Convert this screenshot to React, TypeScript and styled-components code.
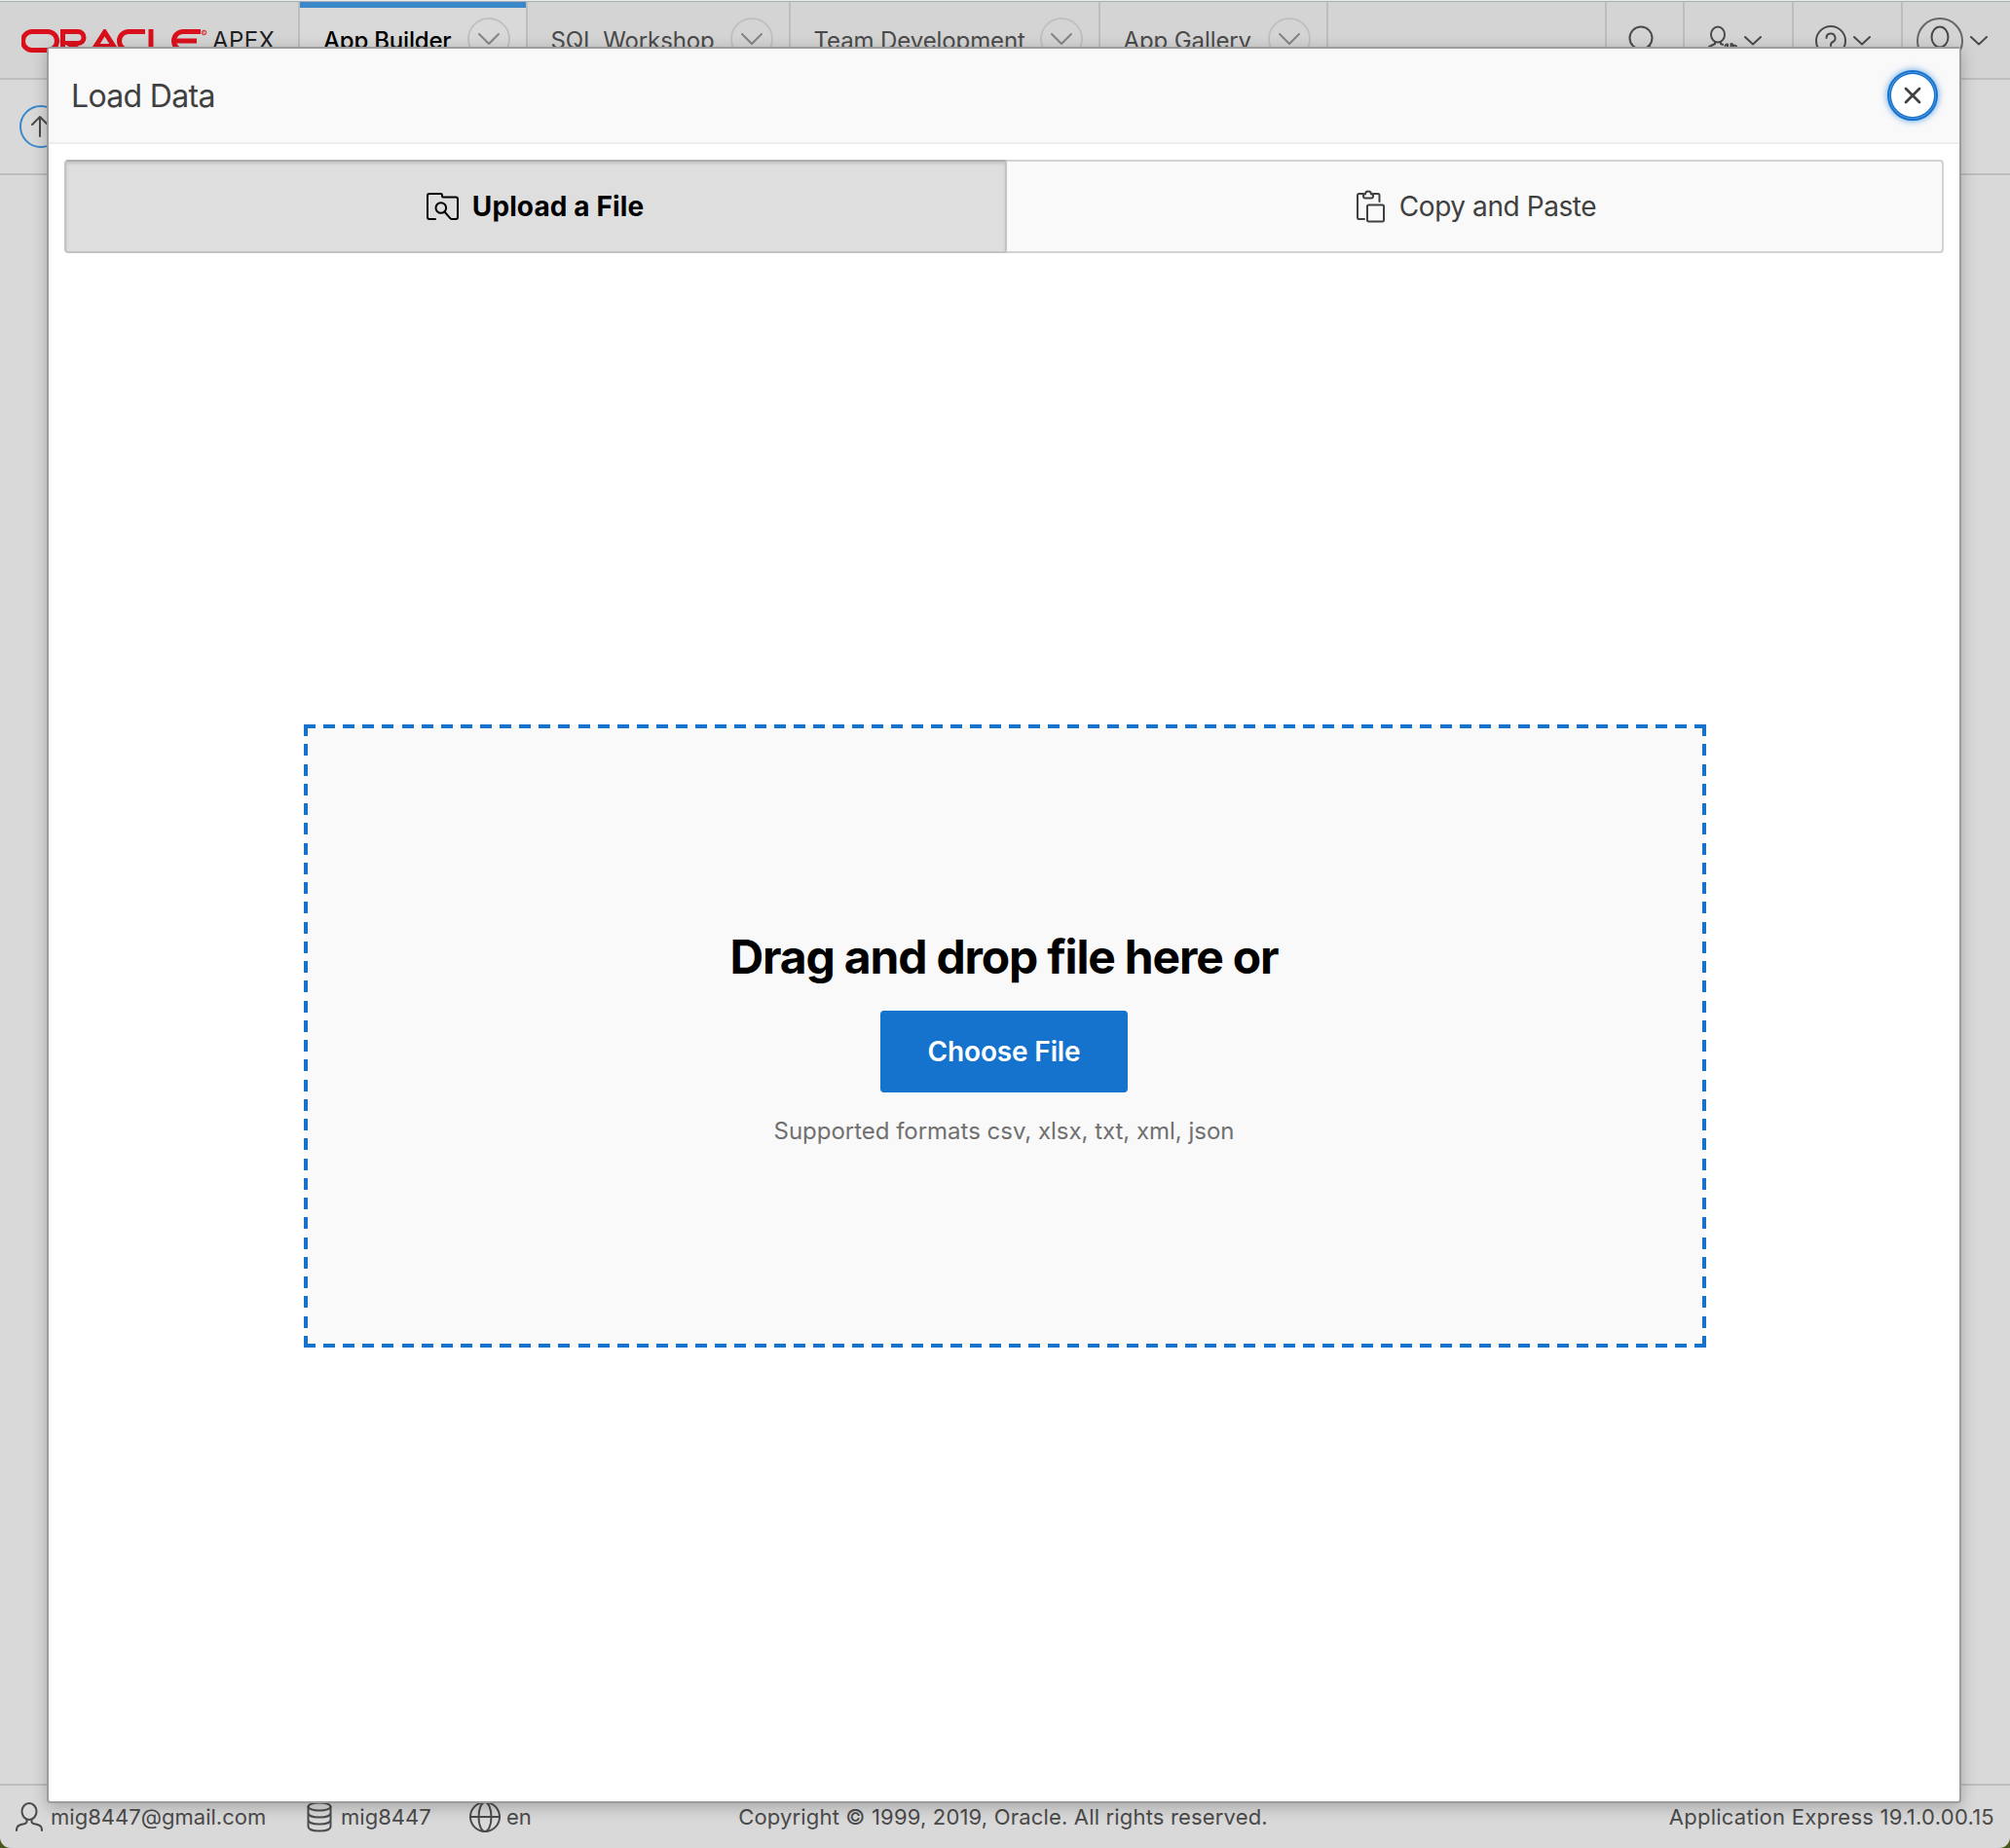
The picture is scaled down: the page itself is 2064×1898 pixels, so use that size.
import React from 'react';
import styled, { createGlobalStyle } from 'styled-components';

const line = '#bdbdbd';
const ink = '#4a4a4a';
const blue = '#1573cd';

const GlobalStyle = createGlobalStyle`
  *, *::before, *::after { box-sizing: border-box; }
  body {
    margin: 0;
    background: #46581c;
    font-family: Inter, 'Liberation Sans', sans-serif;
    color: #404040;
  }
  button { font: inherit; color: inherit; margin: 0; padding: 0; }
  svg { display: block; flex: none; }
`;

const Page = styled.div`
  position: relative;
  width: 2064px;
  height: 1898px;
  display: flex;
  flex-direction: column;
  background: #d9d9d9;
  border-top: 1px solid #e9ecec;
  border-radius: 0 0 11px 11px;
  overflow: hidden;
`;

const NavBar = styled.header`
  display: flex;
  flex: none;
  height: 81px;
  background: #d4d4d4;
  border-top: 1px solid #a9afb0;
  border-bottom: 2px solid ${line};
`;

const Brand = styled.div`
  display: flex;
  width: 308px;
  padding: 0 0 0 22px;
  border-right: 2px solid ${line};
`;

const BrandLogo = styled.svg`
  margin-top: 28px;
`;

const BrandName = styled.span`
  margin-left: 4px;
  line-height: 80px;
  font-size: 24px;
  letter-spacing: 0.4px;
  color: #1f1f1f;
`;

const Tab = styled.div<{ $width: number; $active?: boolean }>`
  display: flex;
  align-items: center;
  justify-content: space-between;
  width: ${(p) => p.$width + 2}px;
  padding: 0 16px 0 ${(p) => (p.$active ? 24 : 23.5)}px;
  border-right: 2px solid ${line};
  background: ${(p) => (p.$active ? '#d9d9d9' : 'transparent')};
  background-image: ${(p) => (p.$active ? 'linear-gradient(#3a88c9, #3a88c9)' : 'none')};
  background-size: 100% 6px;
  background-repeat: no-repeat;
  color: ${(p) => (p.$active ? '#000' : ink)};
  font-size: 24px;
  font-weight: ${(p) => (p.$active ? 500 : 400)};
  letter-spacing: ${(p) => (p.$active ? -0.2 : -0.1)}px;
  white-space: nowrap;
`;

const TabMenu = styled.span`
  display: flex;
  align-items: center;
  justify-content: center;
  width: 44px;
  height: 44px;
  margin-top: -2px;
  border: 2px solid #c0c0c0;
  border-radius: 50%;
  color: #858585;
`;

const NavSpacer = styled.div`
  flex: 1;
`;

const NavTool = styled.div<{ $width: number; $pad: number; $gap?: number }>`
  display: flex;
  align-items: flex-start;
  width: ${(p) => p.$width + 2}px;
  padding-left: ${(p) => p.$pad}px;
  gap: ${(p) => p.$gap ?? 0}px;
  border-left: 2px solid ${line};
  color: ${ink};
`;

const ToolIcon = styled.svg<{ $top: number }>`
  margin-top: ${(p) => p.$top}px;
`;

const Breadcrumb = styled.div`
  display: flex;
  align-items: center;
  flex: none;
  height: 98px;
  padding-left: 20px;
  border-bottom: 2px solid ${line};
`;

const UpButton = styled.span`
  display: flex;
  align-items: center;
  justify-content: center;
  width: 44px;
  height: 44px;
  padding-right: 2px;
  border: 2px solid #3a88c9;
  border-radius: 50%;
  color: ${ink};
`;

const Body = styled.div`
  flex: 1;
`;

const Footer = styled.footer`
  display: grid;
  grid-template-columns: 1fr auto 1fr;
  align-items: center;
  flex: none;
  height: 66px;
  padding: 0 16px;
  border-top: 2px solid ${line};
  color: ${ink};
  font-size: 22px;
`;

const FooterLinks = styled.div`
  display: flex;
  align-items: center;
`;

const FooterItem = styled.span<{ $width: number; $gap: number }>`
  display: flex;
  align-items: center;
  width: ${(p) => p.$width}px;
  gap: ${(p) => p.$gap}px;
  letter-spacing: 0.02px;
`;

const Copyright = styled.span`
  margin-right: 4px;
  letter-spacing: 0.17px;
`;

const Version = styled.span`
  justify-self: end;
  letter-spacing: 0.26px;
`;

const Dialog = styled.section`
  position: absolute;
  inset: 47px 50px 46px 48px;
  display: flex;
  flex-direction: column;
  background: #fff;
  border: 2px solid #9d9d9d;
  border-radius: 4px;
  box-shadow: 0 4px 16px rgba(0, 0, 0, 0.24);
`;

const DialogHeader = styled.div`
  display: flex;
  align-items: center;
  justify-content: space-between;
  flex: none;
  height: 98px;
  padding: 0 22px 0 23px;
  background: #f9f9f9;
  border-bottom: 2px solid #ededed;
`;

const DialogTitle = styled.h1`
  margin: 0;
  font-size: 32px;
  font-weight: 400;
  letter-spacing: -0.68px;
`;

const CloseButton = styled.button`
  display: flex;
  align-items: center;
  justify-content: center;
  width: 52px;
  height: 52px;
  background: #fff;
  border: 2px solid ${blue};
  border-radius: 50%;
  box-shadow: 0 0 6px 1px rgba(40, 130, 225, 0.6), inset 0 0 0 0.6px #5e9fdc, inset 0 0 0 2px ${blue};
`;

const Switch = styled.div`
  display: grid;
  grid-template-columns: 968px 962px;
  flex: none;
  height: 96px;
  margin: 16px 16px 0;
`;

const SwitchOption = styled.button<{ $selected?: boolean }>`
  display: flex;
  align-items: center;
  justify-content: center;
  gap: ${(p) => (p.$selected ? 14 : 15)}px;
  padding: ${(p) => (p.$selected ? '0 2px 0 0' : '0 0 0 3px')};
  border: 2px solid ${(p) => (p.$selected ? '#c3c3c3' : '#d2d2d2')};
  border-top-color: ${(p) => (p.$selected ? '#b0b0b0' : '#d2d2d2')};
  border-left-width: ${(p) => (p.$selected ? 2 : 0)}px;
  border-radius: ${(p) => (p.$selected ? '4px 0 0 4px' : '0 4px 4px 0')};
  background: ${(p) => (p.$selected ? '#dedede' : '#f9f9f9')};
  box-shadow: ${(p) => (p.$selected ? 'inset 0 2px 3px rgba(0, 0, 0, 0.12)' : 'none')};
  color: ${(p) => (p.$selected ? '#000' : '#404040')};
  font-size: 28px;
  font-weight: ${(p) => (p.$selected ? 700 : 400)};
  letter-spacing: ${(p) => (p.$selected ? 0.12 : -0.42)}px;
`;

const dashX = `repeating-linear-gradient(90deg, ${blue} 0 12px, transparent 12px 20.113px)`;
const dashY = `repeating-linear-gradient(180deg, ${blue} 0 12px, transparent 12px 20.258px)`;

const DropZone = styled.div`
  display: flex;
  flex-direction: column;
  align-items: center;
  align-self: center;
  width: 1440px;
  height: 640px;
  margin: 484px 0 0 2px;
  padding: 206px 2px 0 0;
  background:
    ${dashX} 0 0 / 100% 4px no-repeat,
    ${dashX} 0 100% / 100% 4px no-repeat,
    ${dashY} 0 0 / 4px 100% no-repeat,
    ${dashY} 100% 0 / 4px 100% no-repeat,
    #f9f9f9;
`;

const DropTitle = styled.h2`
  margin: 0;
  line-height: 65px;
  font-size: 48px;
  font-weight: 700;
  letter-spacing: -1.18px;
  color: #000;
`;

const ChooseButton = styled.button`
  width: 254px;
  height: 84px;
  margin-top: 23px;
  border: 0;
  border-radius: 4px;
  background: ${blue};
  color: #fff;
  font-size: 28px;
  font-weight: 600;
  letter-spacing: -0.15px;
`;

const DropHint = styled.p`
  margin: 24px 0 0;
  line-height: 32px;
  font-size: 24px;
  letter-spacing: -0.02px;
  color: #707070;
`;

const stroke = {
  fill: 'none',
  stroke: 'currentColor',
  strokeWidth: 2,
  strokeLinecap: 'round' as const,
  strokeLinejoin: 'round' as const,
};

const OracleLogo = () => (
  <BrandLogo width="192" height="24" viewBox="0 0 192 24" fill="none" stroke="#d9101c" strokeWidth="5">
    <path d="M11 2.5H27a9.5 9.5 0 0 1 0 19H11a9.5 9.5 0 0 1 0-19Z" />
    <path d="M42.5 24V2.5H58a6 6 0 0 1 0 12H48L64 24" />
    <path d="M72 24 85.5 3 99 24M79 17.5H94" />
    <path d="M127 2.5H110a9.5 9.5 0 0 0 0 19H127" />
    <path d="M133 0V21.5H150" />
    <path d="M184 2.5H166a9.5 9.5 0 0 0 0 19H182M158 12H180" />
    <circle cx="187.5" cy="3.5" r="2.3" strokeWidth="0.9" />
    <path d="M187 5V2.3h1.2M187.5 3.8l1 1" strokeWidth="0.7" />
  </BrandLogo>
);

const Chevron = ({ top }: { top: number }) => (
  <ToolIcon $top={top} width="20" height="12" viewBox="0 0 20 12" {...stroke}>
    <path d="M2 2l8 7.5L18 2" />
  </ToolIcon>
);

const TabChevron = () => (
  <svg width="24" height="14" viewBox="0 0 24 14" {...stroke}>
    <path d="M2 2l10 10L22 2" />
  </svg>
);

const TABS = [
  { label: 'App Builder', width: 232, active: true },
  { label: 'SQL Workshop', width: 268 },
  { label: 'Team Development', width: 316 },
  { label: 'App Gallery', width: 232 },
];

export default function App() {
  return (
    <>
      <GlobalStyle />
      <Page>
        <NavBar>
          <Brand>
            <OracleLogo />
            <BrandName>APEX</BrandName>
          </Brand>
          {TABS.map((tab) => (
            <Tab key={tab.label} $width={tab.width} $active={tab.active}>
              {tab.label}
              <TabMenu>
                <TabChevron />
              </TabMenu>
            </Tab>
          ))}
          <NavSpacer />
          <NavTool $width={78} $pad={22}>
            <ToolIcon $top={24} width="32" height="32" viewBox="0 0 32 32" {...stroke}>
              <circle cx="13" cy="13" r="11.5" />
              <path d="M21 21l8 8" />
            </ToolIcon>
          </NavTool>
          <NavTool $width={110} $pad={23} $gap={5}>
            <ToolIcon $top={24} width="32" height="32" viewBox="0 0 32 32" {...stroke}>
              <ellipse cx="11" cy="9.5" rx="7" ry="8" />
              <path d="M8 17v2l-6 3q-1 1-1 6M14 17v2l2 0.8M18.5 21q0.5-1.500 2.500-1.500v4M24.5 23v-4q2 0 2.500 3M28.500 20.500l1.500 1" />
            </ToolIcon>
            <Chevron top={34} />
          </NavTool>
          <NavTool $width={110} $pad={22} $gap={6}>
            <ToolIcon $top={24} width="32" height="32" viewBox="0 0 32 32" {...stroke}>
              <circle cx="16" cy="16" r="15" />
              <path d="M11.5 13a4.5 4.5 0 1 1 6.5 4q-2 1-2 3v1" />
            </ToolIcon>
            <Chevron top={34} />
          </NavTool>
          <NavTool $width={110} $pad={14} $gap={6}>
            <ToolIcon $top={16} width="48" height="48" viewBox="0 0 48 48" {...stroke}>
              <circle cx="24" cy="24" r="23" stroke="#666" />
              <ellipse cx="24" cy="20" rx="8.5" ry="10.5" />
              <path d="M20 30v4l-9 4M28 30v4l9 4" />
            </ToolIcon>
            <Chevron top={34} />
          </NavTool>
        </NavBar>
        <Breadcrumb>
          <UpButton>
            <svg width="20" height="24" viewBox="0 0 20 24" {...stroke}>
              <path d="M10 22V2M2 10l8-8 8 8" />
            </svg>
          </UpButton>
        </Breadcrumb>
        <Body />
        <Footer>
          <FooterLinks>
            <FooterItem $width={299} $gap={8}>
              <svg width="28" height="30" viewBox="0 0 28 30" {...stroke}>
                <ellipse cx="14" cy="9.5" rx="7.5" ry="8.5" />
                <path d="M11.5 18v2q0 1.5-3 2.3-5 1-6.5 2.7-1 1.5-1 4M16.5 18v2q0 1.5 3 2.3 5 1 6.5 2.7 1 1.5 1 4" />
              </svg>
              mig8447@gmail.com
            </FooterItem>
            <FooterItem $width={167} $gap={9}>
              <svg width="26" height="32" viewBox="0 0 26 32" {...stroke}>
                <ellipse cx="13" cy="5.5" rx="11.5" ry="4" />
                <path d="M1.5 5.5V26c0 2.5 4 4.5 11.5 4.5s11.5-2 11.5-4.5V5.5M1.5 12c0 2.5 4 4.5 11.5 4.5s11.5-2 11.5-4.5M1.5 19c0 2.5 4 4.5 11.5 4.5s11.5-2 11.5-4.5" />
              </svg>
              mig8447
            </FooterItem>
            <FooterItem $width={70} $gap={6}>
              <svg width="32" height="32" viewBox="0 0 32 32" {...stroke}>
                <circle cx="16" cy="16" r="15" />
                <ellipse cx="16" cy="16" rx="6.5" ry="15" />
                <path d="M1 16h30" />
              </svg>
              en
            </FooterItem>
          </FooterLinks>
          <Copyright>Copyright © 1999, 2019, Oracle. All rights reserved.</Copyright>
          <Version>Application Express 19.1.0.00.15</Version>
        </Footer>

        <Dialog role="dialog">
          <DialogHeader>
            <DialogTitle>Load Data</DialogTitle>
            <CloseButton aria-label="Close">
              <svg width="20" height="20" viewBox="0 0 20 20" {...stroke} strokeWidth={2.8}>
                <path d="M3 3l14 14M17 3L3 17" />
              </svg>
            </CloseButton>
          </DialogHeader>
          <Switch>
            <SwitchOption $selected>
              <svg width="34" height="30" viewBox="0 0 34 30" {...stroke}>
                <path d="M10 28H4a2 2 0 0 1-2-2V4a2 2 0 0 1 2-2H15.5a1.5 1.5 0 0 1 1.5 1.5v1a1 1 0 0 0 1 1H31a2 2 0 0 1 2 2V26a2 2 0 0 1-2 2H27.5q-1.5 0-2.5-1.2L19.5 20.5" />
                <circle cx="15.8" cy="16.5" r="5.3" />
              </svg>
              Upload a File
            </SwitchOption>
            <SwitchOption>
              <svg width="30" height="34" viewBox="0 0 30 34" {...stroke}>
                <path d="M8 4H3.5A1.5 1.5 0 0 0 2 5.5V28.5A1.5 1.5 0 0 0 3.5 30H9M18 4h5a1.5 1.5 0 0 1 1.5 1.5V12" />
                <path d="M8 4.5h2a3 3 0 0 1 6 0h2V6.5a2 2 0 0 1-2 2H10a2 2 0 0 1-2-2Z" />
                <rect x="12" y="15.5" width="17" height="17" rx="1.5" />
              </svg>
              Copy and Paste
            </SwitchOption>
          </Switch>
          <DropZone>
            <DropTitle>Drag and drop file here or</DropTitle>
            <ChooseButton>Choose File</ChooseButton>
            <DropHint>Supported formats csv, xlsx, txt, xml, json</DropHint>
          </DropZone>
        </Dialog>
      </Page>
    </>
  );
}
